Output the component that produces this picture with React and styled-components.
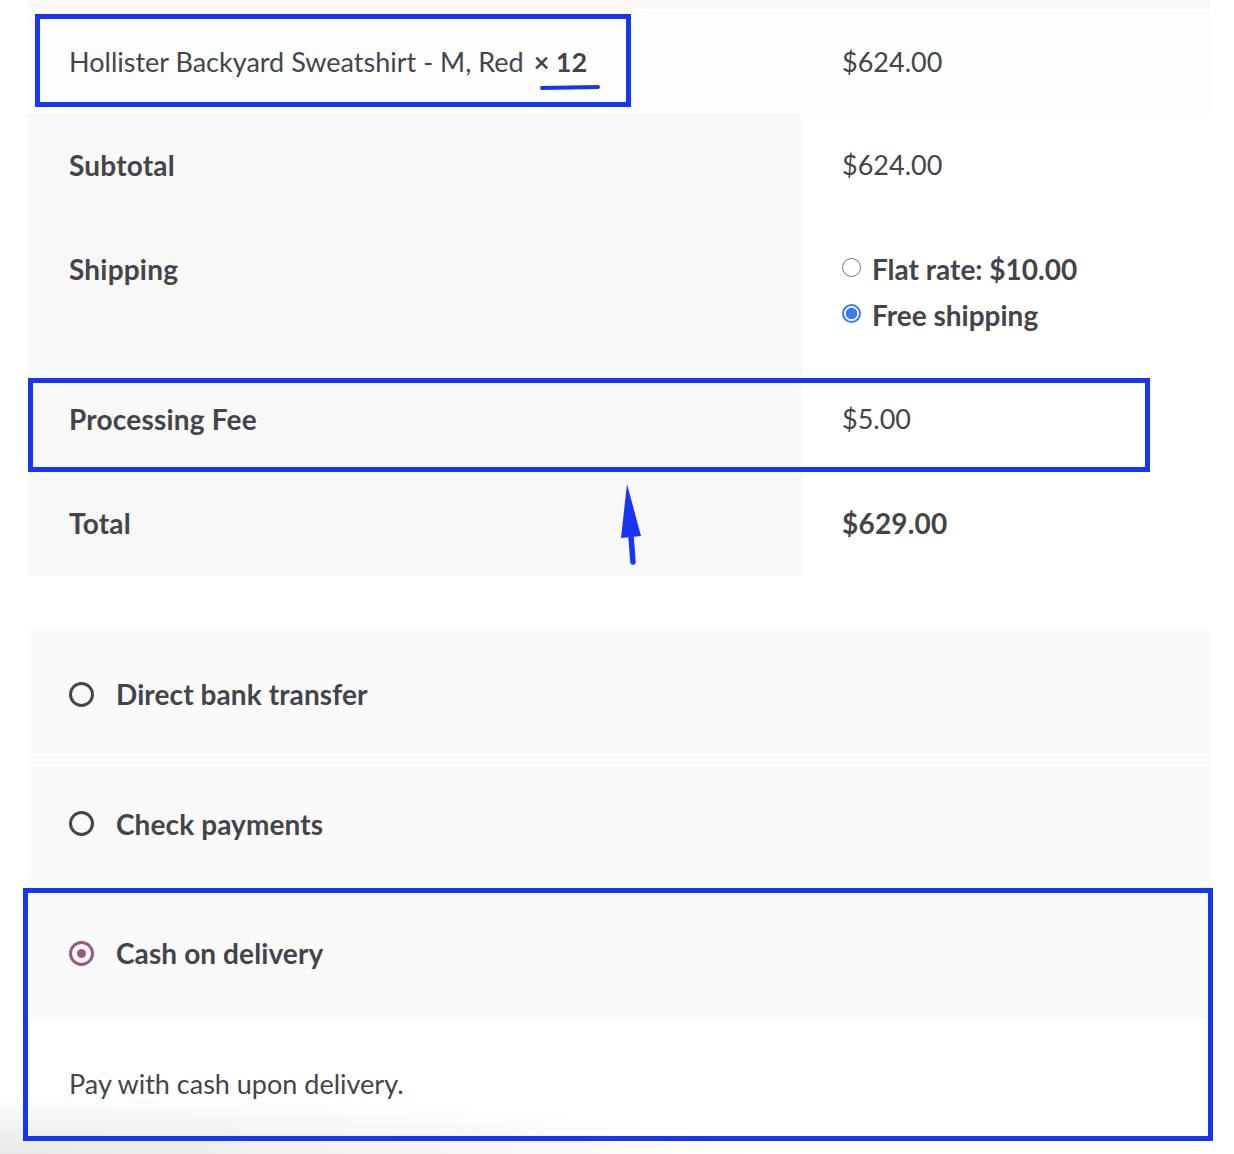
import React from "react";
import styled, { createGlobalStyle } from "styled-components";

const GlobalStyle = createGlobalStyle`
  body {
    margin: 0;
    background: #ffffff;
    font-family: "Lato", "Open Sans", sans-serif;
    color: #43454b;
  }
`;

const Page = styled.div`
  position: relative;
  width: 1234px;
  height: 1154px;
  overflow: hidden;
  padding-left: 28px;
  box-sizing: border-box;
`;

const OrderTable = styled.div`
  display: grid;
  grid-template-columns: 773px 410px;
`;

const HeadStrip = styled.div`
  grid-column: 1 / 3;
  height: 9px;
  background: #f8f8f8;
`;

const Cell = styled.div`
  padding: ${(p) => (p.$first ? "32px 41px 31px" : "30px 41px 32px")};
  font-size: ${(p) => (p.$bold ? 28 : 27)}px;
  letter-spacing: ${(p) => (p.$bold ? "0.2px" : "0")};
  line-height: 42px;
  background: ${(p) => p.$bg || "#ffffff"};
  font-weight: ${(p) => (p.$bold ? 700 : 400)};
`;

const Quantity = styled.strong`
  font-weight: 700;
  margin-left: 10px;
`;

const ShipList = styled.ul`
  list-style: none;
  margin: 0;
  padding: 0;
  display: flex;
  flex-direction: column;
  gap: 4px;
`;

const ShipOption = styled.li`
  display: flex;
  align-items: center;
  gap: 11px;
  font-weight: 700;
  font-size: 28px;
  letter-spacing: 0;
`;

const NativeRadio = styled.span`
  width: 19px;
  height: 19px;
  border-radius: 50%;
  box-sizing: border-box;
  flex-shrink: 0;
  margin-top: -4px;
  border: ${(p) => (p.$checked ? "2px solid #3b7cf2" : "1.5px solid #767676")};
  background: ${(p) =>
    p.$checked
      ? "radial-gradient(circle, #3b7cf2 0 5.5px, #ffffff 6px)"
      : "#ffffff"};
`;

const Payments = styled.ul`
  list-style: none;
  margin: 55px 0 0;
  padding: 0;
  width: 1183px;
  display: flex;
  flex-direction: column;
  gap: 2px;
`;

const PaymentItem = styled.li`
  background: #fafafa;
`;

const PaymentHead = styled.div`
  height: ${(p) => p.$h}px;
  display: flex;
  align-items: center;
  gap: 22px;
  padding-left: 41px;
  padding-bottom: 2px;
  box-sizing: border-box;
  font-size: 28px;
  letter-spacing: 0.1px;
  font-weight: 700;
`;

const PayRadio = styled.span`
  width: 25px;
  height: 25px;
  border-radius: 50%;
  box-sizing: border-box;
  border: 3px solid ${(p) => (p.$checked ? "#96588a" : "#43454b")};
  display: flex;
  align-items: center;
  justify-content: center;

  &::after {
    content: "";
    width: 9px;
    height: 9px;
    border-radius: 50%;
    background: #96588a;
    display: ${(p) => (p.$checked ? "block" : "none")};
  }
`;

const PaymentBox = styled.div`
  background: #ffffff;
  height: 120px;
  padding: 45px 0 0 41px;
  box-sizing: border-box;
  font-size: 27px;
  line-height: 42px;
`;

const Highlight = styled.div`
  position: absolute;
  left: ${(p) => p.$x}px;
  top: ${(p) => p.$y}px;
  width: ${(p) => p.$w}px;
  height: ${(p) => p.$h}px;
  border: 5.5px solid #1834f5;
  box-sizing: border-box;
  pointer-events: none;
`;

const Scribble = styled.svg`
  position: absolute;
  left: 0;
  top: 0;
  pointer-events: none;
`;

const BottomShade = styled.div`
  position: absolute;
  left: 0;
  bottom: 0;
  width: 1000px;
  height: 80px;
  pointer-events: none;
  background: radial-gradient(
    ellipse 760px 60px at 0% 100%,
    rgba(0, 0, 0, 0.09),
    rgba(0, 0, 0, 0) 100%
  );
`;

const App = () => (
  <>
    <GlobalStyle />
    <Page>
      <OrderTable>
        <HeadStrip />
        <Cell $bg="#fdfdfd" $first>
          Hollister Backyard Sweatshirt - M, Red
          <Quantity>× 12</Quantity>
        </Cell>
        <Cell $bg="#fdfdfd" $first>$624.00</Cell>

        <Cell $bg="#f8f8f8" $bold>Subtotal</Cell>
        <Cell>$624.00</Cell>

        <Cell $bg="#f8f8f8" $bold>Shipping</Cell>
        <Cell>
          <ShipList>
            <ShipOption>
              <NativeRadio />
              Flat rate: $10.00
            </ShipOption>
            <ShipOption>
              <NativeRadio $checked />
              Free shipping
            </ShipOption>
          </ShipList>
        </Cell>

        <Cell $bg="#f8f8f8" $bold>Processing Fee</Cell>
        <Cell>$5.00</Cell>

        <Cell $bg="#f8f8f8" $bold>Total</Cell>
        <Cell $bold>$629.00</Cell>
      </OrderTable>

      <Payments>
        <PaymentItem>
          <PaymentHead $h={128}>
            <PayRadio />
            Direct bank transfer
          </PaymentHead>
        </PaymentItem>
        <PaymentItem>
          <PaymentHead $h={127}>
            <PayRadio />
            Check payments
          </PaymentHead>
        </PaymentItem>
        <PaymentItem>
          <PaymentHead $h={128}>
            <PayRadio $checked />
            Cash on delivery
          </PaymentHead>
          <PaymentBox>Pay with cash upon delivery.</PaymentBox>
        </PaymentItem>
      </Payments>

      <BottomShade />

      <Highlight $x={35} $y={14} $w={596} $h={93} />
      <Highlight $x={28} $y={378} $w={1122} $h={94} />
      <Highlight $x={23} $y={888} $w={1190} $h={253} />

      <Scribble width="1234" height="1154" viewBox="0 0 1234 1154">
        <path
          d="M542 88 L598 87"
          stroke="#1834f5"
          strokeWidth="4"
          strokeLinecap="round"
          fill="none"
        />
        <path
          d="M631 536 L633 562"
          stroke="#1834f5"
          strokeWidth="5.5"
          strokeLinecap="round"
          fill="none"
        />
        <polygon points="627,484 621,538 641,536" fill="#1834f5" />
      </Scribble>
    </Page>
  </>
);

export default App;
